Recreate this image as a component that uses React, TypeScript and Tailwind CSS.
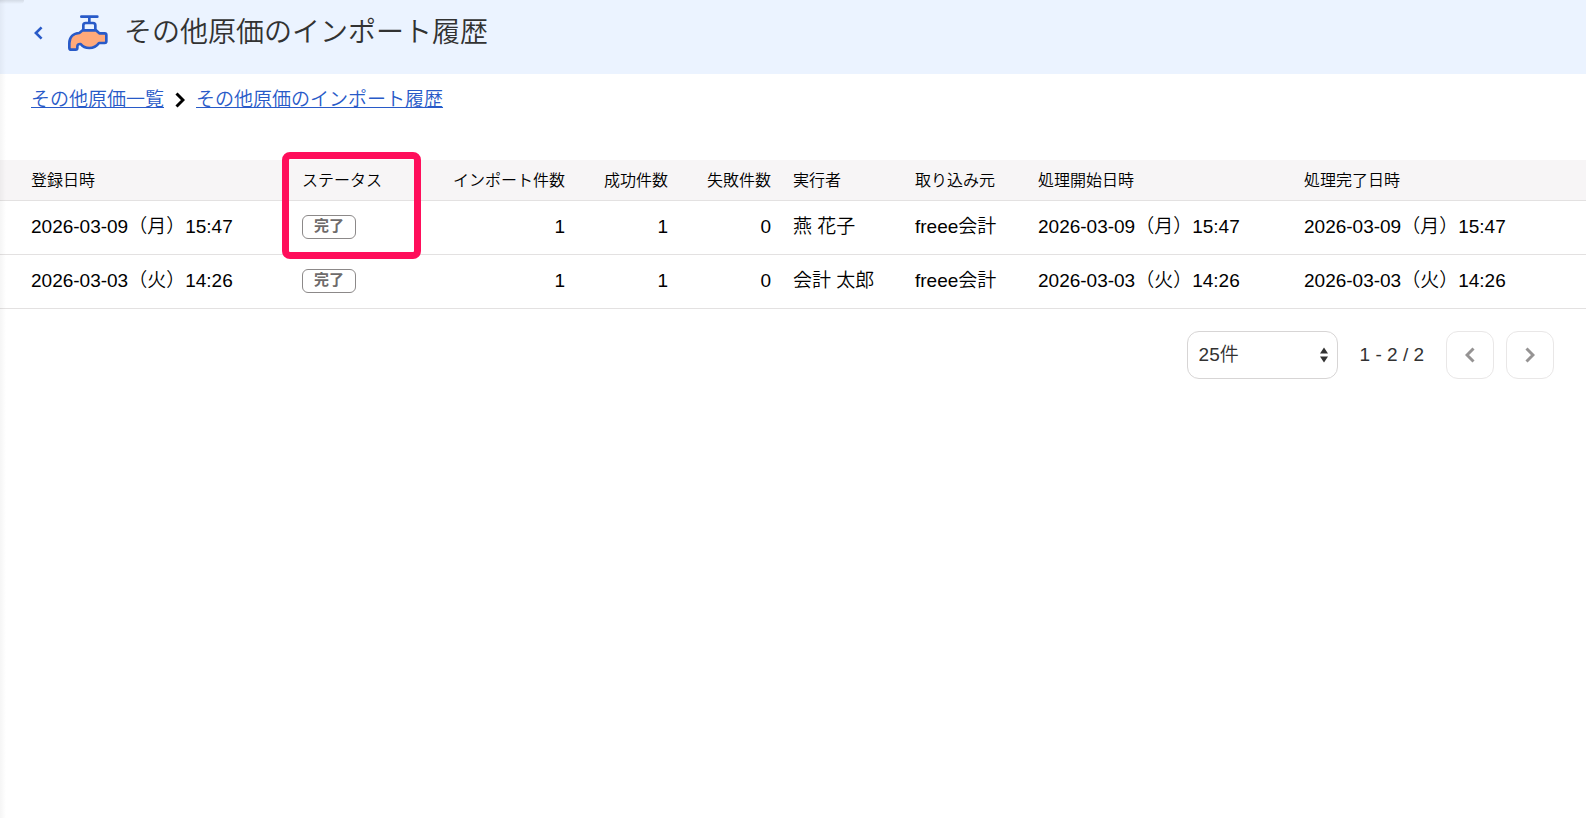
import React from "react";

type ImportRecord = {
  registeredAt: string;
  status: string;
  total: number;
  succeeded: number;
  failed: number;
  user: string;
  source: string;
  startedAt: string;
  finishedAt: string;
};

const records: ImportRecord[] = [
  {
    registeredAt: "2026-03-09（月）15:47",
    status: "完了",
    total: 1,
    succeeded: 1,
    failed: 0,
    user: "燕 花子",
    source: "freee会計",
    startedAt: "2026-03-09（月）15:47",
    finishedAt: "2026-03-09（月）15:47",
  },
  {
    registeredAt: "2026-03-03（火）14:26",
    status: "完了",
    total: 1,
    succeeded: 1,
    failed: 0,
    user: "会計 太郎",
    source: "freee会計",
    startedAt: "2026-03-03（火）14:26",
    finishedAt: "2026-03-03（火）14:26",
  },
];

function FaucetIcon() {
  return (
    <svg viewBox="27 21 120 108" className="h-9 w-10" fill="none" stroke="#285ac8" strokeWidth="8" strokeLinecap="round" strokeLinejoin="round" aria-hidden="true">
      <path d="M67 26H115M91 26V44" />
      <path d="M73 67V52Q73 45 80 45H102Q109 45 109 52V67Z" fill="#ebf3ff" />
      <path
        d="M71 67H111L121 76H137Q142 76 142 81V100Q142 105 137 105H120Q109 120 91 120Q74 120 65 108Q55 107 55 116V120Q55 125 50 125H37Q31 125 31 119V106C31 88 43 76 61 75Z"
        fill="#ffa97a"
      />
    </svg>
  );
}

function Chevron({ direction, className }: { direction: "left" | "right"; className: string }) {
  return (
    <svg viewBox="0 0 10 16" className={className} fill="none" stroke="currentColor" aria-hidden="true">
      <path d={direction === "left" ? "M8.5 1.5L2 8L8.5 14.5" : "M1.5 1.5L8 8L1.5 14.5"} />
    </svg>
  );
}

function StatusBadge({ children }: { children: React.ReactNode }) {
  return (
    <span className="flex h-6 w-fit items-center rounded-md border border-[#8c8989] px-[11px] pb-[2px] text-[15px] leading-5 font-bold text-[#6e6b6b]">
      {children}
    </span>
  );
}

function PageButton({ direction, label }: { direction: "left" | "right"; label: string }) {
  return (
    <button type="button" disabled aria-label={label} className="flex size-12 items-center justify-center rounded-xl border border-[#e9e7e7] bg-white text-[#959393]">
      <Chevron direction={direction} className="h-4 w-[10px] stroke-[3]" />
    </button>
  );
}

export default function App() {
  return (
    <div className="relative min-h-screen bg-white font-['Liberation_Sans','Noto_Sans_CJK_JP',sans-serif] text-[19px] leading-7 font-[350] text-black">
      <div className="pointer-events-none absolute inset-y-0 left-0 w-[6px] bg-linear-to-r from-black/4 to-transparent" />
      <div className="pointer-events-none absolute top-0 left-0 h-1 w-6 rounded-br-full bg-linear-to-b from-black/10 to-transparent" />

      <header className="flex h-[74px] items-center bg-[#ebf3ff] px-8 pb-2">
        <button type="button" aria-label="戻る" className="mr-6 flex w-3 justify-center text-[#285ac8]">
          <Chevron direction="left" className="h-[14px] w-[9px] stroke-[3]" />
        </button>
        <FaucetIcon />
        <h1 className="ml-4 text-[28px] leading-10 font-[350] text-[#323232]">その他原価のインポート履歴</h1>
      </header>

      <nav aria-label="パンくずリスト" className="flex items-center gap-[11px] px-[31px] pt-3 text-[#285ac8]">
        <a href="#list" className="underline">
          その他原価一覧
        </a>
        <Chevron direction="right" className="h-4 w-[10px] stroke-[3] text-black" />
        <a href="#history" className="underline">
          その他原価のインポート履歴
        </a>
      </nav>

      <main className="pt-[46px]">
        <table className="w-full table-fixed border-collapse text-left">
          <colgroup>
            <col className="w-[291px]" />
            <col className="w-[140px]" />
            <col className="w-[145px]" />
            <col className="w-[103px]" />
            <col className="w-[103px]" />
            <col className="w-[122px]" />
            <col className="w-[123px]" />
            <col className="w-[266px]" />
            <col />
          </colgroup>
          <thead className="bg-[#f7f5f6] text-base">
            <tr className="h-10 border-b border-[#e3e1e1] *:px-[11px] *:pt-[2px] *:font-[350] *:whitespace-nowrap">
              <th scope="col" className="pl-[31px]!">登録日時</th>
              <th scope="col" className="relative">
                ステータス
                <div className="pointer-events-none absolute -top-2 left-[-9px] h-[107px] w-[139px] rounded-lg border-[7px] border-[#ff0e5b]" />
              </th>
              <th scope="col" className="text-right">インポート件数</th>
              <th scope="col" className="text-right">成功件数</th>
              <th scope="col" className="text-right">失敗件数</th>
              <th scope="col">実行者</th>
              <th scope="col">取り込み元</th>
              <th scope="col">処理開始日時</th>
              <th scope="col">処理完了日時</th>
            </tr>
          </thead>
          <tbody>
            {records.map((record) => (
              <tr key={record.registeredAt} className="h-[54px] border-b border-[#e3e1e1] *:px-[11px] *:whitespace-nowrap">
                <td className="pl-[31px]!">{record.registeredAt}</td>
                <td>
                  <StatusBadge>{record.status}</StatusBadge>
                </td>
                <td className="text-right">{record.total}</td>
                <td className="text-right">{record.succeeded}</td>
                <td className="text-right">{record.failed}</td>
                <td>{record.user}</td>
                <td>{record.source}</td>
                <td>{record.startedAt}</td>
                <td>{record.finishedAt}</td>
              </tr>
            ))}
          </tbody>
        </table>

        <div className="flex items-center justify-end gap-3 px-8 pt-[22px] text-[#323232]">
          <div className="relative">
            <select aria-label="表示件数" className="h-12 w-[151px] appearance-none rounded-xl border border-[#d7d5d5] bg-white pl-[11px]">
              <option>25件</option>
              <option>50件</option>
              <option>100件</option>
            </select>
            <svg viewBox="0 0 8 16" className="pointer-events-none absolute top-4 right-[10px] h-4 w-2" fill="#323232" aria-hidden="true">
              <path d="M4 0.5L8 6.5H0ZM4 15.5L0 9.5H8Z" />
            </svg>
          </div>
          <span className="px-[10px]">1 - 2 / 2</span>
          <PageButton direction="left" label="前のページ" />
          <PageButton direction="right" label="次のページ" />
        </div>
      </main>
    </div>
  );
}
